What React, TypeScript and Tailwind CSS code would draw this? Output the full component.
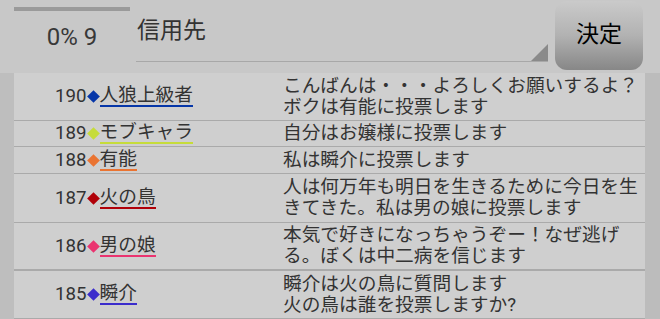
import React from "react";

const rows = [
  { n: 190, name: "人狼上級者", color: "#0636a8", msg: ["こんばんは・・・よろしくお願いするよ？", "ボクは有能に投票します"], h: "h-[48px]" },
  { n: 189, name: "モブキャラ", color: "#c6dc3a", msg: ["自分はお嬢様に投票します"], h: "h-[26px]" },
  { n: 188, name: "有能", color: "#ea7432", msg: ["私は瞬介に投票します"], h: "h-[27px]" },
  { n: 187, name: "火の鳥", color: "#b00008", msg: ["人は何万年も明日を生きるために今日を生", "きてきた。私は男の娘に投票します"], h: "h-[49px]" },
  { n: 186, name: "男の娘", color: "#ea3470", msg: ["本気で好きになっちゃうぞー！なぜ逃げ", "る。ぼくは中二病を信じます"], h: "h-[48px]" },
  { n: 185, name: "瞬介", color: "#3b2ccc", msg: ["瞬介は火の鳥に質問します", "火の鳥は誰を投票しますか?"], h: "h-[48px]" },
];

export default function App() {
  return (
    <div
      className="w-[660px] h-[319px] overflow-hidden bg-[#c8c8c8] text-[#333]"
      style={{ fontFamily: 'Roboto, "Noto Sans CJK JP", sans-serif' }}
    >
      <div className="flex h-[73px]">
        <div className="ml-[14px] w-[116px] flex flex-col items-center">
          <div className="w-full h-[4px] mt-[7px] bg-[#9a9a9a]" />
          <div className="mt-[12px] text-[24px] leading-[28px] text-[#383838]">0% 9</div>
        </div>
        <div className="ml-[6px] w-[412px] h-[62px] relative border-b border-[#a8a8a8]">
          <div className="pt-[16px] pl-[1px] text-[23px] leading-[30px] text-[#333]">信用先</div>
          <div
            className="absolute right-0 bottom-0 w-[17px] h-[17px] bg-[#8a8a8a]"
            style={{ clipPath: "polygon(100% 0, 100% 100%, 0 100%)" }}
          />
        </div>
        <div className="ml-[7px] mt-[1px] w-[88px] h-[69px] rounded-[12px] bg-gradient-to-b from-[#cacaca] via-[#b2b2b2] to-[#878787] flex items-center justify-center text-[23px] text-black">
          決定
        </div>
      </div>
      <div className="flex h-[246px]">
        <div className="w-[14px] bg-[#bebebe]" />
        <div className="w-[631px] bg-[#cfcfcf] flex flex-col">
          {rows.map((r, i) => (
            <div
              key={r.n}
              className={`flex items-center shrink-0 border-b border-[#aaaaaa] ${r.h} ${i === 4 ? "border-b-2" : ""}`}
            >
              <div className="w-[269px] flex items-center pl-[41px] text-[18.7px]">
                <span className="leading-[19px]">{r.n}</span>
                <span className="w-[13px] flex items-center justify-center">
                  <span className="block w-[9px] h-[9px] rotate-45" style={{ background: r.color }} />
                </span>
                <span className="leading-[19px] border-b-2" style={{ borderColor: r.color }}>
                  {r.name}
                </span>
              </div>
              <div className="flex-1 text-[18.7px] leading-[21px] text-[#333] whitespace-nowrap">
                {r.msg.map((m, j) => (
                  <div key={j}>{m}</div>
                ))}
              </div>
            </div>
          ))}
        </div>
        <div className="flex-1 bg-[#bcbcbc]" />
      </div>
    </div>
  );
}
